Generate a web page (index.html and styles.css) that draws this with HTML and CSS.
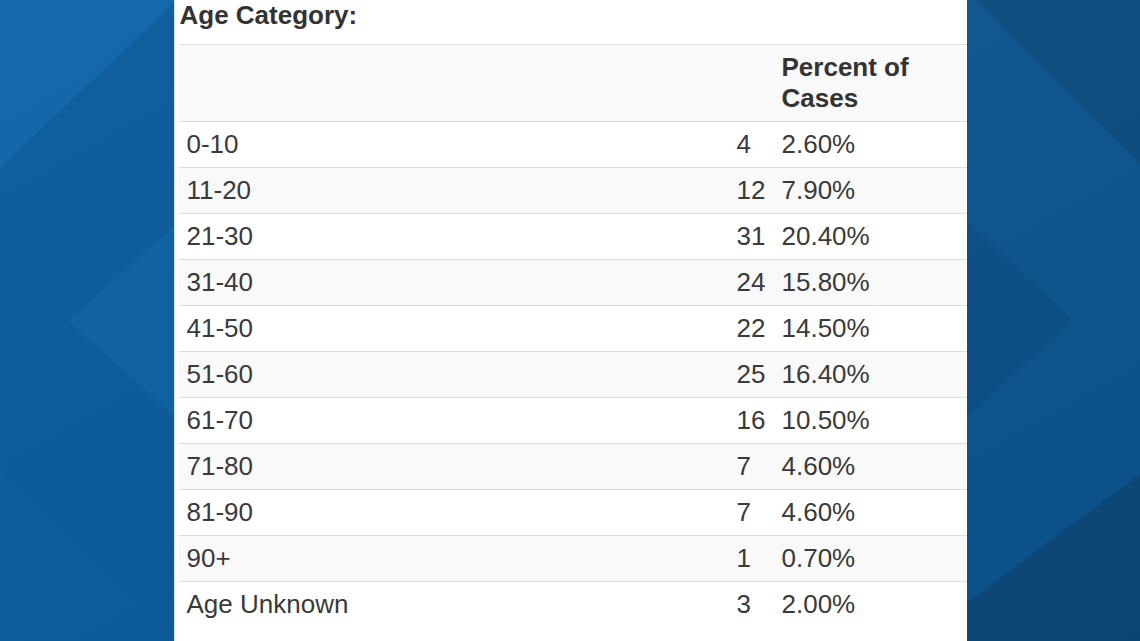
FILE: index.html
```html
<!DOCTYPE html>
<html lang="en">
<head>
<meta charset="utf-8">
<title>Age Category</title>
<link rel="stylesheet" href="styles.css">
</head>
<body>
<div class="stage">
  <svg class="backdrop" width="1140" height="641" viewBox="0 0 1140 641" aria-hidden="true">
    <defs>
      <linearGradient id="shade" x1="0" y1="0" x2="1" y2="1">
        <stop offset="0" stop-color="#ffffff" stop-opacity="0.04"/>
        <stop offset="1" stop-color="#000000" stop-opacity="0.06"/>
      </linearGradient>
    </defs>
    <rect x="0" y="0" width="1140" height="641" fill="#085a9b"/>
    <polygon points="0,0 190,0 190,-12 0,168" fill="#0a63a9"/>
    <polygon points="0,168 190,-12 190,647 0,470" fill="#07589a"/>
    <polygon points="68,321 190,212 190,430" fill="#095e9f"/>
    <polygon points="0,470 190,647 190,641 0,641" fill="#085a9b"/>
    <polygon points="950,0 1140,0 1140,641 950,641" fill="#0a5591"/>
    <polygon points="975,0 1140,0 1140,164" fill="#0b4c80"/>
    <polygon points="950,205 1072,319 950,433" fill="#0a4f88"/>
    <polygon points="1140,474 1140,641 915,641" fill="#0b4a7c"/>
    <rect x="0" y="0" width="1140" height="641" fill="url(#shade)"/>
  </svg>
  <main class="panel">
    <h2 class="title">Age Category:</h2>
    <table class="cases">
      <colgroup>
        <col class="col-age">
        <col class="col-count">
        <col class="col-pct">
      </colgroup>
      <thead>
        <tr><th></th><th></th><th>Percent of Cases</th></tr>
      </thead>
      <tbody>
        <tr><td>0-10</td><td>4</td><td>2.60%</td></tr>
        <tr><td>11-20</td><td>12</td><td>7.90%</td></tr>
        <tr><td>21-30</td><td>31</td><td>20.40%</td></tr>
        <tr><td>31-40</td><td>24</td><td>15.80%</td></tr>
        <tr><td>41-50</td><td>22</td><td>14.50%</td></tr>
        <tr><td>51-60</td><td>25</td><td>16.40%</td></tr>
        <tr><td>61-70</td><td>16</td><td>10.50%</td></tr>
        <tr><td>71-80</td><td>7</td><td>4.60%</td></tr>
        <tr><td>81-90</td><td>7</td><td>4.60%</td></tr>
        <tr><td>90+</td><td>1</td><td>0.70%</td></tr>
        <tr><td>Age Unknown</td><td>3</td><td>2.00%</td></tr>
      </tbody>
    </table>
  </main>
</div>
</body>
</html>
```
FILE: styles.css
```css
html, body {
  margin: 0;
  padding: 0;
  width: 1140px;
  height: 641px;
  overflow: hidden;
  font-family: "Liberation Sans", Arial, sans-serif;
  color: #333;
}

.stage {
  position: relative;
  width: 1140px;
  height: 641px;
  display: flex;
  justify-content: center;
}

.backdrop {
  position: absolute;
  left: 0;
  top: 0;
  z-index: 0;
}

.panel {
  position: relative;
  z-index: 1;
  width: 788px;
  height: 641px;
  background: #fff;
  border-left: 1px solid #d6e4f0;
  padding-left: 4px;
  box-sizing: content-box;
}

.title {
  margin: 0 0 13px 0;
  padding-left: 1px;
  font-size: 26px;
  line-height: 31px;
  font-weight: bold;
  color: #333;
}

.cases {
  width: 788px;
  border-collapse: collapse;
  table-layout: fixed;
  font-size: 26px;
  line-height: 31px;
  color: #3a3a3a;
}

.col-age { width: 550px; }
.col-count { width: 45px; }
.col-pct { width: 193px; }

.cases th,
.cases td {
  padding: 7px 8px;
  border-top: 1px solid #dddddd;
  text-align: left;
  vertical-align: top;
}

.cases th {
  font-weight: bold;
  vertical-align: bottom;
  background: #f9f9f9;
  color: #333;
}

.cases tbody tr:nth-child(even) td {
  background: #f9f9f9;
}
```
